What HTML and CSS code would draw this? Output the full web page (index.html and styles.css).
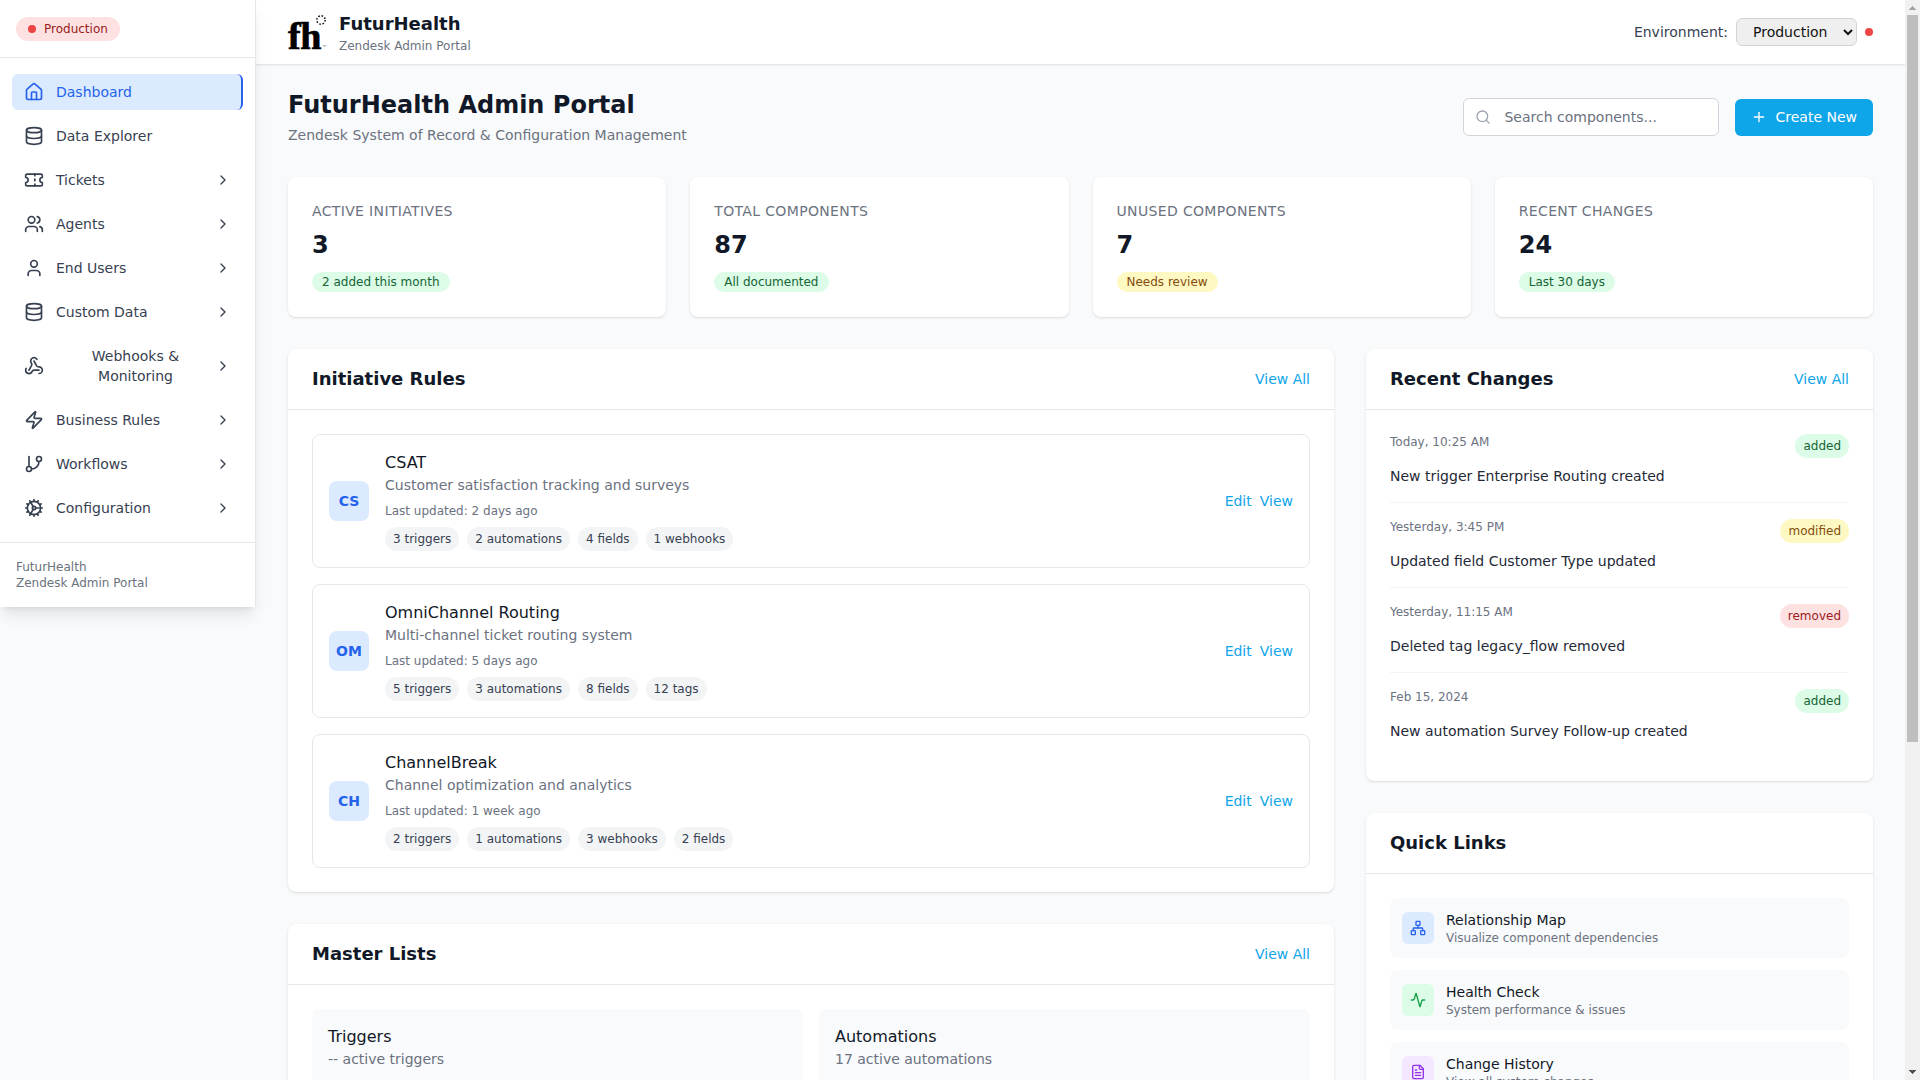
FILE: index.html
```html
<!DOCTYPE html>
<html lang="en">
<head>
<meta charset="utf-8">
<title>FuturHealth Admin Portal</title>
<link rel="stylesheet" href="styles.css">
</head>
<body>
<svg class="defs" xmlns="http://www.w3.org/2000/svg">
  <symbol id="i-home" viewBox="0 0 24 24"><path d="M15 21v-8a1 1 0 0 0-1-1h-4a1 1 0 0 0-1 1v8"/><path d="M3 10a2 2 0 0 1 .709-1.528l7-5.999a2 2 0 0 1 2.582 0l7 5.999A2 2 0 0 1 21 10v9a2 2 0 0 1-2 2H5a2 2 0 0 1-2-2z"/></symbol>
  <symbol id="i-db" viewBox="0 0 24 24"><ellipse cx="12" cy="5" rx="9" ry="3"/><path d="M3 5V19A9 3 0 0 0 21 19V5"/><path d="M3 12A9 3 0 0 0 21 12"/></symbol>
  <symbol id="i-ticket" viewBox="0 0 24 24"><path d="M2 9a3 3 0 0 1 0 6v2a2 2 0 0 0 2 2h16a2 2 0 0 0 2-2v-2a3 3 0 0 1 0-6V7a2 2 0 0 0-2-2H4a2 2 0 0 0-2 2Z"/><path d="M13 5v2"/><path d="M13 17v2"/><path d="M13 11v2"/></symbol>
  <symbol id="i-users" viewBox="0 0 24 24"><path d="M16 21v-2a4 4 0 0 0-4-4H6a4 4 0 0 0-4 4v2"/><circle cx="9" cy="7" r="4"/><path d="M22 21v-2a4 4 0 0 0-3-3.87"/><path d="M16 3.13a4 4 0 0 1 0 7.75"/></symbol>
  <symbol id="i-user" viewBox="0 0 24 24"><path d="M19 21v-2a4 4 0 0 0-4-4H9a4 4 0 0 0-4 4v2"/><circle cx="12" cy="7" r="4"/></symbol>
  <symbol id="i-webhook" viewBox="0 0 24 24"><path d="M18 16.98h-5.99c-1.1 0-1.95.94-2.48 1.9A4 4 0 0 1 2 17c.01-.7.2-1.4.57-2"/><path d="m6 17 3.13-5.78c.53-.97.1-2.18-.5-3.1a4 4 0 1 1 6.89-4.06"/><path d="m12 6 3.13 5.73C15.66 12.7 16.9 13 18 13a4 4 0 0 1 0 8"/></symbol>
  <symbol id="i-zap" viewBox="0 0 24 24"><path d="M4 14a1 1 0 0 1-.78-1.63l9.9-10.2a.5.5 0 0 1 .86.46l-1.92 6.02A1 1 0 0 0 13 10h7a1 1 0 0 1 .78 1.63l-9.9 10.2a.5.5 0 0 1-.86-.46l1.92-6.02A1 1 0 0 0 11 14z"/></symbol>
  <symbol id="i-branch" viewBox="0 0 24 24"><line x1="6" x2="6" y1="3" y2="15"/><circle cx="18" cy="6" r="3"/><circle cx="6" cy="18" r="3"/><path d="M18 9a9 9 0 0 1-9 9"/></symbol>
  <symbol id="i-cog" viewBox="0 0 24 24"><path d="M12 20a8 8 0 1 0 0-16 8 8 0 0 0 0 16Z"/><path d="M12 14a2 2 0 1 0 0-4 2 2 0 0 0 0 4Z"/><path d="M12 2v2"/><path d="M12 22v-2"/><path d="m17 20.66-1-1.73"/><path d="M11 10.27 7 3.34"/><path d="m20.66 17-1.73-1"/><path d="m3.34 7 1.73 1"/><path d="M14 12h8"/><path d="M2 12h2"/><path d="m20.66 7-1.73 1"/><path d="m3.34 17 1.73-1"/><path d="m17 3.34-1 1.73"/><path d="m11 13.73-4 6.93"/></symbol>
  <symbol id="i-chev" viewBox="0 0 24 24"><path d="m9 18 6-6-6-6"/></symbol>
  <symbol id="i-search" viewBox="0 0 24 24"><circle cx="11" cy="11" r="8"/><path d="m21 21-4.3-4.3"/></symbol>
  <symbol id="i-plus" viewBox="0 0 24 24"><path d="M5 12h14"/><path d="M12 5v14"/></symbol>
  <symbol id="i-network" viewBox="0 0 24 24"><rect x="16" y="16" width="6" height="6" rx="1"/><rect x="2" y="16" width="6" height="6" rx="1"/><rect x="9" y="2" width="6" height="6" rx="1"/><path d="M5 16v-3a1 1 0 0 1 1-1h12a1 1 0 0 1 1 1v3"/><path d="M12 12V8"/></symbol>
  <symbol id="i-activity" viewBox="0 0 24 24"><path d="M22 12h-2.48a2 2 0 0 0-1.93 1.46l-2.35 8.36a.25.25 0 0 1-.48 0L9.24 2.18a.25.25 0 0 0-.48 0l-2.35 8.36A2 2 0 0 1 4.49 12H2"/></symbol>
  <symbol id="i-file" viewBox="0 0 24 24"><path d="M15 2H6a2 2 0 0 0-2 2v16a2 2 0 0 0 2 2h12a2 2 0 0 0 2-2V7Z"/><path d="M14 2v4a2 2 0 0 0 2 2h4"/><path d="M10 9H8"/><path d="M16 13H8"/><path d="M16 17H8"/></symbol>
</svg>

<div class="shell">
<div class="app">
  <aside class="sidebar">
    <div class="side-top">
      <span class="env-badge"><span class="env-badge-dot"></span>Production</span>
    </div>
    <nav class="nav">
      <a class="nav-item active"><svg class="icon nav-icon"><use href="#i-home"/></svg><span class="nav-label">Dashboard</span></a>
      <a class="nav-item"><svg class="icon nav-icon"><use href="#i-db"/></svg><span class="nav-label">Data Explorer</span></a>
      <a class="nav-item"><svg class="icon nav-icon"><use href="#i-ticket"/></svg><span class="nav-label">Tickets</span><svg class="icon chev"><use href="#i-chev"/></svg></a>
      <a class="nav-item"><svg class="icon nav-icon"><use href="#i-users"/></svg><span class="nav-label">Agents</span><svg class="icon chev"><use href="#i-chev"/></svg></a>
      <a class="nav-item"><svg class="icon nav-icon"><use href="#i-user"/></svg><span class="nav-label">End Users</span><svg class="icon chev"><use href="#i-chev"/></svg></a>
      <a class="nav-item"><svg class="icon nav-icon"><use href="#i-db"/></svg><span class="nav-label">Custom Data</span><svg class="icon chev"><use href="#i-chev"/></svg></a>
      <a class="nav-item"><svg class="icon nav-icon"><use href="#i-webhook"/></svg><span class="nav-label">Webhooks &amp; Monitoring</span><svg class="icon chev"><use href="#i-chev"/></svg></a>
      <a class="nav-item"><svg class="icon nav-icon"><use href="#i-zap"/></svg><span class="nav-label">Business Rules</span><svg class="icon chev"><use href="#i-chev"/></svg></a>
      <a class="nav-item"><svg class="icon nav-icon"><use href="#i-branch"/></svg><span class="nav-label">Workflows</span><svg class="icon chev"><use href="#i-chev"/></svg></a>
      <a class="nav-item"><svg class="icon nav-icon"><use href="#i-cog"/></svg><span class="nav-label">Configuration</span><svg class="icon chev"><use href="#i-chev"/></svg></a>
    </nav>
    <div class="side-foot">
      <div>FuturHealth</div>
      <div>Zendesk Admin Portal</div>
    </div>
  </aside>

  <div class="content">
    <header class="topbar">
      <div class="brand">
        <div class="logo">
          <span class="logo-mark">fh</span>
          <svg class="logo-dots" viewBox="0 0 12 12"><circle cx="6" cy="6" r="4.2"/></svg>
          <span class="logo-tm">™</span>
        </div>
        <div class="brand-text">
          <div class="brand-name">FuturHealth</div>
          <div class="brand-sub">Zendesk Admin Portal</div>
        </div>
      </div>
      <div class="env">
        <label class="env-label" for="env">Environment:</label>
        <select class="env-select" id="env">
          <option>Production</option>
          <option>Sandbox</option>
        </select>
        <span class="env-dot"></span>
      </div>
    </header>

    <main class="main">
      <div class="page-head">
        <div>
          <h1 class="page-title">FuturHealth Admin Portal</h1>
          <p class="page-sub">Zendesk System of Record &amp; Configuration Management</p>
        </div>
        <div class="page-actions">
          <div class="search">
            <svg class="icon search-icon"><use href="#i-search"/></svg>
            <input class="search-input" type="text" placeholder="Search components...">
          </div>
          <button class="btn-primary"><svg class="icon btn-icon"><use href="#i-plus"/></svg>Create New</button>
        </div>
      </div>

      <div class="stats">
        <div class="stat"><div class="stat-label">ACTIVE INITIATIVES</div><div class="stat-value">3</div><span class="pill green">2 added this month</span></div>
        <div class="stat"><div class="stat-label">TOTAL COMPONENTS</div><div class="stat-value">87</div><span class="pill green">All documented</span></div>
        <div class="stat"><div class="stat-label">UNUSED COMPONENTS</div><div class="stat-value">7</div><span class="pill yellow">Needs review</span></div>
        <div class="stat"><div class="stat-label">RECENT CHANGES</div><div class="stat-value">24</div><span class="pill green">Last 30 days</span></div>
      </div>

      <div class="columns">
        <div class="col-wide">
          <section class="panel">
            <div class="panel-head"><h2 class="panel-title">Initiative Rules</h2><a class="link">View All</a></div>
            <div class="panel-body initiatives">
              <article class="initiative">
                <div class="init-icon">CS</div>
                <div class="init-main">
                  <div class="init-name">CSAT</div>
                  <div class="init-desc">Customer satisfaction tracking and surveys</div>
                  <div class="init-updated">Last updated: 2 days ago</div>
                  <div class="tags"><span class="tag">3 triggers</span><span class="tag">2 automations</span><span class="tag">4 fields</span><span class="tag">1 webhooks</span></div>
                </div>
                <div class="init-actions"><a class="action">Edit</a><a class="action">View</a></div>
              </article>
              <article class="initiative">
                <div class="init-icon">OM</div>
                <div class="init-main">
                  <div class="init-name">OmniChannel Routing</div>
                  <div class="init-desc">Multi-channel ticket routing system</div>
                  <div class="init-updated">Last updated: 5 days ago</div>
                  <div class="tags"><span class="tag">5 triggers</span><span class="tag">3 automations</span><span class="tag">8 fields</span><span class="tag">12 tags</span></div>
                </div>
                <div class="init-actions"><a class="action">Edit</a><a class="action">View</a></div>
              </article>
              <article class="initiative">
                <div class="init-icon">CH</div>
                <div class="init-main">
                  <div class="init-name">ChannelBreak</div>
                  <div class="init-desc">Channel optimization and analytics</div>
                  <div class="init-updated">Last updated: 1 week ago</div>
                  <div class="tags"><span class="tag">2 triggers</span><span class="tag">1 automations</span><span class="tag">3 webhooks</span><span class="tag">2 fields</span></div>
                </div>
                <div class="init-actions"><a class="action">Edit</a><a class="action">View</a></div>
              </article>
            </div>
          </section>

          <section class="panel">
            <div class="panel-head"><h2 class="panel-title">Master Lists</h2><a class="link">View All</a></div>
            <div class="panel-body master-grid">
              <div class="master"><div class="init-name">Triggers</div><div class="init-desc">-- active triggers</div></div>
              <div class="master"><div class="init-name">Automations</div><div class="init-desc">17 active automations</div></div>
            </div>
          </section>
        </div>

        <div class="col-narrow">
          <section class="panel">
            <div class="panel-head"><h2 class="panel-title">Recent Changes</h2><a class="link">View All</a></div>
            <div class="panel-body">
              <div class="change">
                <div class="change-top"><span class="change-time">Today, 10:25 AM</span><span class="pill chip green">added</span></div>
                <div class="change-text">New trigger Enterprise Routing created</div>
              </div>
              <div class="change">
                <div class="change-top"><span class="change-time">Yesterday, 3:45 PM</span><span class="pill chip yellow">modified</span></div>
                <div class="change-text">Updated field Customer Type updated</div>
              </div>
              <div class="change">
                <div class="change-top"><span class="change-time">Yesterday, 11:15 AM</span><span class="pill chip red">removed</span></div>
                <div class="change-text">Deleted tag legacy_flow removed</div>
              </div>
              <div class="change">
                <div class="change-top"><span class="change-time">Feb 15, 2024</span><span class="pill chip green">added</span></div>
                <div class="change-text">New automation Survey Follow-up created</div>
              </div>
            </div>
          </section>

          <section class="panel">
            <div class="panel-head"><h2 class="panel-title">Quick Links</h2></div>
            <div class="panel-body quick-list">
              <a class="quick"><span class="quick-icon q-blue"><svg class="icon q-svg"><use href="#i-network"/></svg></span><span class="quick-text"><span class="quick-title">Relationship Map</span><span class="quick-sub">Visualize component dependencies</span></span></a>
              <a class="quick"><span class="quick-icon q-green"><svg class="icon q-svg"><use href="#i-activity"/></svg></span><span class="quick-text"><span class="quick-title">Health Check</span><span class="quick-sub">System performance &amp; issues</span></span></a>
              <a class="quick"><span class="quick-icon q-purple"><svg class="icon q-svg"><use href="#i-file"/></svg></span><span class="quick-text"><span class="quick-title">Change History</span><span class="quick-sub">View all system changes</span></span></a>
            </div>
          </section>
        </div>
      </div>
    </main>
  </div>
</div>
<div class="vbar" aria-hidden="true">
  <div class="vbar-btn vbar-up"></div>
  <div class="vbar-thumb"></div>
  <div class="vbar-rest"></div>
  <div class="vbar-btn vbar-down"></div>
</div>
</div>
</body>
</html>
```

FILE: styles.css
```css
* { box-sizing: border-box; }
html, body { margin: 0; padding: 0; height: 100%; overflow: hidden; }
body {
  font-family: "DejaVu Sans", sans-serif;
  font-size: 16px;
  line-height: 24px;
  color: #111827;
  background: #f9fafb;
}
a { text-decoration: none; cursor: pointer; }
h1, h2, p { margin: 0; }
.defs { display: none; }
.icon {
  fill: none;
  stroke: currentColor;
  stroke-width: 2;
  stroke-linecap: round;
  stroke-linejoin: round;
  flex-shrink: 0;
}

.shell { display: flex; height: 100vh; }
.app { flex: 1; min-width: 0; display: flex; align-items: flex-start; height: 100vh; overflow-y: auto; }

/* Window scrollbar */
.vbar { width: 15px; flex-shrink: 0; height: 100vh; background: #f1f1f1; display: flex; flex-direction: column; }
.vbar-btn { width: 15px; height: 15px; flex-shrink: 0; background-repeat: no-repeat; }
.vbar-up {
  background-image: conic-gradient(from 135deg at 7.5px 6px, #a3a3a3 90deg, transparent 0);
  background-size: 15px 10px;
}
.vbar-down {
  background-image: conic-gradient(from -45deg at 7.5px 4.5px, #505050 90deg, transparent 0);
  background-size: 15px 5px;
  background-position: 0 5px;
}
.vbar-thumb { width: 11px; height: 727px; margin-left: 2px; background: #bebebe; flex-shrink: 0; }
.vbar-rest { flex: 1; }

/* Sidebar */
.sidebar {
  width: 256px;
  flex-shrink: 0;
  background: #fff;
  border-right: 1px solid #e5e7eb;
  box-shadow: 0 10px 15px -3px rgba(0,0,0,.1), 0 4px 6px -4px rgba(0,0,0,.1);
  position: relative;
  z-index: 2;
}
.side-top { padding: 17px 16px 16px; border-bottom: 1px solid #e5e7eb; height: 58px; }
.env-badge {
  display: inline-flex;
  align-items: center;
  gap: 8px;
  height: 24px;
  padding: 0 12px;
  border-radius: 9999px;
  background: #fee2e2;
  color: #991b1b;
  font-size: 12px;
  line-height: 16px;
  vertical-align: top;
}
.env-badge-dot { width: 8px; height: 8px; border-radius: 50%; background: #ef4444; }
.nav { padding: 16px 12px; display: flex; flex-direction: column; gap: 8px; }
.nav-item {
  display: flex;
  align-items: center;
  padding: 8px 12px;
  font-size: 14px;
  line-height: 20px;
  color: #374151;
  border-radius: 6px;
  text-align: center;
}
.nav-item.active {
  background: #dbeafe;
  color: #2563eb;
  border-right: 2px solid #2563eb;
}
.nav-icon { width: 20px; height: 20px; margin-right: 12px; }
.chev { width: 16px; height: 16px; margin-left: auto; }

.side-foot {
  padding: 16px;
  border-top: 1px solid #e5e7eb;
  font-size: 12px;
  line-height: 16px;
  color: #6b7280;
}

/* Content */
.content { flex: 1; min-width: 0; }
.topbar {
  height: 65px;
  background: #fff;
  border-bottom: 1px solid #e5e7eb;
  box-shadow: 0 1px 2px rgba(0,0,0,.05);
  padding: 0 32px;
  display: flex;
  align-items: center;
  justify-content: space-between;
}
.brand { display: flex; align-items: center; gap: 12px; }
.logo { width: 39px; height: 40px; position: relative; }
.logo-mark {
  position: absolute;
  left: 0;
  bottom: -3px;
  font-family: "Liberation Serif", serif;
  font-weight: 700;
  font-size: 38px;
  line-height: 38px;
  letter-spacing: -.5px;
  color: #000;
  -webkit-text-stroke: .7px #000;
}
.logo-dots { position: absolute; right: 0; top: 2px; width: 12px; height: 12px; fill: none; stroke: #111; stroke-width: 1.5; stroke-dasharray: 1.6 1.7; }
.logo-tm { position: absolute; right: 0; bottom: 2px; font-size: 5px; line-height: 6px; color: #555; }
.brand-name { font-size: 18px; line-height: 28px; font-weight: 700; color: #111827; }
.brand-sub { font-size: 12px; line-height: 16px; color: #6b7280; }
.env { display: flex; align-items: center; gap: 8px; }
.env-label { font-size: 14px; line-height: 20px; color: #374151; }
.env-select {
  font-family: inherit;
  font-size: 14px;
  height: 28px;
  width: 121px;
  padding: 0 4px 0 12px;
  border: 1px solid #d1d5db;
  border-radius: 6px;
  color: #111;
}
.env-dot { width: 8px; height: 8px; border-radius: 50%; background: #ef4444; }

.main { padding: 24px 32px; }
.page-head { display: flex; align-items: center; justify-content: space-between; margin-bottom: 32px; }
.page-title { font-size: 24px; line-height: 32px; font-weight: 700; color: #111827; }
.page-sub { margin-top: 4px; font-size: 14px; line-height: 20px; color: #6b7280; }
.page-actions { display: flex; align-items: center; gap: 16px; }
.search { position: relative; width: 256px; }
.search-icon { position: absolute; left: 12px; top: 11px; width: 16px; height: 16px; color: #9ca3af; }
.search-input {
  width: 100%;
  height: 38px;
  padding: 0 12px 0 40px;
  border: 1px solid #d1d5db;
  border-radius: 6px;
  background: #fff;
  font-family: inherit;
  font-size: 14px;
  display: block;
}
.search-input::placeholder { color: #6b7280; opacity: 1; }
.btn-primary {
  display: flex;
  align-items: center;
  gap: 8px;
  height: 37px;
  padding: 0 16px;
  border: 0;
  border-radius: 6px;
  background: #0ea5e9;
  color: #fff;
  font-family: inherit;
  font-size: 14px;
  line-height: 20px;
}
.btn-icon { width: 16px; height: 16px; }

/* Stats */
.stats { display: grid; grid-template-columns: repeat(4, 1fr); gap: 24px; margin-bottom: 32px; }
.stat, .panel {
  background: #fff;
  border-radius: 8px;
  box-shadow: 0 1px 3px rgba(0,0,0,.1), 0 1px 2px -1px rgba(0,0,0,.1);
}
.stat { padding: 24px 24px 25px; height: 140px; display: flex; flex-direction: column; align-items: flex-start; }
.stat-label { font-size: 14px; line-height: 20px; color: #6b7280; letter-spacing: .35px; }
.stat-value { margin-top: 8px; font-size: 24px; line-height: 32px; font-weight: 700; color: #111827; }
.stat .pill { margin-top: 11px; }
.pill {
  display: inline-block;
  padding: 2px 10px;
  border-radius: 9999px;
  font-size: 12px;
  line-height: 16px;
}
.green { background: #dcfce7; color: #166534; }
.yellow { background: #fef9c3; color: #854d0e; }
.red { background: #fee2e2; color: #991b1b; }

/* Columns */
.columns { display: grid; grid-template-columns: repeat(3, 1fr); gap: 32px; align-items: start; }
.col-wide { grid-column: span 2; display: flex; flex-direction: column; gap: 32px; }
.col-narrow { display: flex; flex-direction: column; gap: 32px; }
.panel-head {
  height: 61px;
  padding: 0 24px;
  border-bottom: 1px solid #e5e7eb;
  display: flex;
  align-items: center;
  justify-content: space-between;
}
.panel-title { font-size: 18px; line-height: 28px; font-weight: 700; color: #111827; }
.link { font-size: 14px; line-height: 20px; color: #0ea5e9; }
.panel-body { padding: 24px; }

.initiatives { display: flex; flex-direction: column; gap: 16px; }
.initiative {
  border: 1px solid #e5e7eb;
  border-radius: 8px;
  padding: 16px;
  display: flex;
  align-items: center;
  gap: 16px;
}
.init-icon {
  width: 40px;
  height: 40px;
  border-radius: 8px;
  background: #dbeafe;
  color: #2563eb;
  font-size: 14px;
  font-weight: 700;
  display: flex;
  align-items: center;
  justify-content: center;
  flex-shrink: 0;
}
.init-main { flex: 1; min-width: 0; }
.init-name { font-size: 16px; line-height: 24px; color: #111827; }
.init-desc { font-size: 14px; line-height: 20px; color: #6b7280; }
.init-updated { margin-top: 8px; font-size: 12px; line-height: 16px; color: #6b7280; }
.tags { margin-top: 8px; display: flex; gap: 8px; }
.tag { padding: 4px 8px; border-radius: 9999px; background: #f3f4f6; color: #374151; font-size: 12px; line-height: 16px; }
.init-actions { display: flex; gap: 8px; }
.action { font-size: 14px; line-height: 20px; color: #0ea5e9; }

.master-grid { display: grid; grid-template-columns: repeat(2, 1fr); gap: 16px; }
.master { background: #f9fafb; border-radius: 8px; padding: 16px; height: 157px; }

.change { padding-bottom: 16px; margin-bottom: 16px; border-bottom: 1px solid #f3f4f6; }
.change:last-child { margin-bottom: 0; border-bottom: 0; }
.change-top { display: flex; justify-content: space-between; align-items: flex-start; }
.change-time { font-size: 12px; line-height: 16px; color: #6b7280; }
.chip { padding: 4px 8px 4px 8px; }
.change-text { margin-top: 8px; font-size: 14px; line-height: 20px; color: #1f2937; }

.quick-list { display: flex; flex-direction: column; gap: 12px; }
.quick { display: flex; align-items: center; gap: 12px; padding: 12px; background: #f9fafb; border-radius: 8px; }
.quick-icon { width: 32px; height: 32px; border-radius: 6px; display: flex; align-items: center; justify-content: center; flex-shrink: 0; }
.q-svg { width: 16px; height: 16px; }
.q-blue { background: #dbeafe; color: #2563eb; }
.q-green { background: #dcfce7; color: #16a34a; }
.q-purple { background: #f3e8ff; color: #9333ea; }
.quick-text { display: flex; flex-direction: column; }
.quick-title { font-size: 14px; line-height: 20px; color: #111827; }
.quick-sub { font-size: 12px; line-height: 16px; color: #6b7280; }
```
